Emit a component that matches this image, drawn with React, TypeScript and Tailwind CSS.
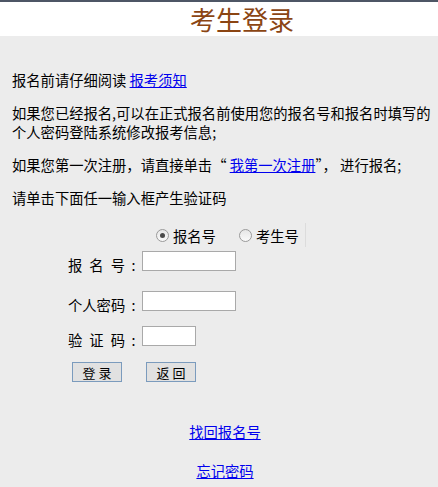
import { useState } from 'react';

const cjk = { fontFamily: '"Noto Sans CJK SC", "Noto Sans", sans-serif' };

function Radio({ checked, label, onClick }: { checked: boolean; label: string; onClick: () => void }) {
  return (
    <label className="flex items-center gap-[4px] cursor-pointer" onClick={onClick}>
      <span className="flex h-[13px] w-[13px] items-center justify-center rounded-full border border-[#9a9a9a] bg-gradient-to-b from-[#e6e6e6] to-[#fafafa]">
        {checked && <span className="h-[5px] w-[5px] rounded-full bg-[#4a4a4a]" />}
      </span>
      <span>{label}</span>
    </label>
  );
}

function SpreadLabel({ text }: { text: string }) {
  return (
    <span className="flex w-[74px] translate-y-[4px] items-center leading-[20px]">
      <span className="flex w-[57px] justify-between">
        {text.split('').map((c, i) => (
          <span key={i}>{c}</span>
        ))}
      </span>
      <span className="flex-1 text-center">:</span>
    </span>
  );
}

const inputCls = 'h-[20px] border border-[#a9a9a9] bg-white px-1 text-[13px] outline-none';
const btnCls = 'h-[20px] w-[50px] border border-[#7b9bbd] bg-[#e1e1e1] text-[13px] leading-none';

export default function App() {
  const [mode, setMode] = useState<'bmh' | 'ksh'>('bmh');

  return (
    <div className="flex min-h-screen flex-col bg-[#ececec] text-[14.3px] text-black" style={cjk}>
      <div className="h-[2px] bg-[#4e5665]" />
      <div className="flex h-[34px] items-center justify-center bg-white pl-[46px]">
        <h1 className="text-[26px] leading-[32px] text-[#8b4513]">考生登录</h1>
      </div>

      <div className="flex flex-1 flex-col pl-3 pt-[34px] leading-[19px]">
        <p className="mb-[14px]">
          报名前请仔细阅读 <a href="#" className="text-[#0000ee] underline">报考须知</a>
        </p>
        <p className="mb-[14px]">
          如果您已经报名,可以在正式报名前使用您的报名号和报名时填写的个人密码登陆系统修改报考信息;
        </p>
        <p className="mb-[14px]">
          如果您第一次注册，请直接单击“ <a href="#" className="text-[#0000ee] underline">我第一次注册</a>”， 进行报名;
        </p>
        <p>请单击下面任一输入框产生验证码</p>

        <div className="ml-[144px] mt-[18px] flex h-[20px] items-center">
          <Radio checked={mode === 'bmh'} label="报名号" onClick={() => setMode('bmh')} />
          <div className="ml-[23px]">
            <Radio checked={mode === 'ksh'} label="考生号" onClick={() => setMode('ksh')} />
          </div>
          <div className="ml-[6px] h-[24px] w-px bg-[#dcdcdc]" />
        </div>

        <div className="ml-[56px] mt-[6px] flex flex-col">
          <div className="flex h-[20px] items-center">
            <SpreadLabel text="报名号" />
            <input className={`${inputCls} w-[94px]`} />
          </div>
          <div className="mt-[20px] flex h-[20px] items-center">
            <SpreadLabel text="个人密码" />
            <input type="password" className={`${inputCls} w-[94px]`} />
          </div>
          <div className="mt-[15px] flex h-[20px] items-center">
            <SpreadLabel text="验证码" />
            <input className={`${inputCls} w-[54px]`} />
          </div>
          <div className="ml-[4px] mt-[16px] flex gap-[24px]">
            <button className={btnCls}>登 录</button>
            <button className={btnCls}>返 回</button>
          </div>
        </div>

        <div className="mt-[40px] flex flex-col items-center gap-[20px]">
          <a href="#" className="text-[#0000ee] underline">找回报名号</a>
          <a href="#" className="text-[#0000ee] underline">忘记密码</a>
        </div>
      </div>
    </div>
  );
}
